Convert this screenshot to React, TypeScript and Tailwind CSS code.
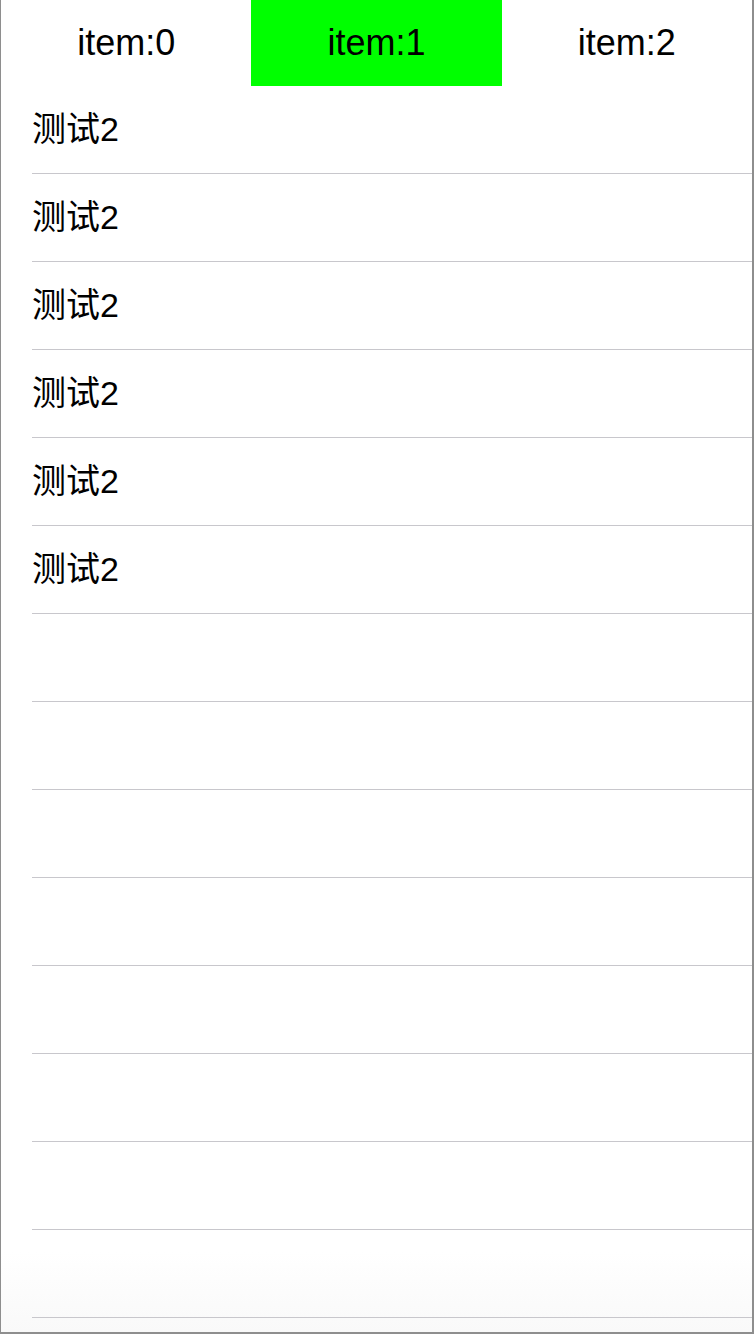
const tabs = ["item:0", "item:1", "item:2"];
const rows = ["测试2", "测试2", "测试2", "测试2", "测试2", "测试2", "", "", "", "", "", "", "", ""];

const font = {
  fontFamily: '"Liberation Sans", "Noto Sans CJK SC", sans-serif',
};

export default function App() {
  const active = 1;

  return (
    <div className="w-[754px] h-[1334px] bg-[#8e8e8e] overflow-hidden" style={font}>
      <div className="ml-px w-[751px] h-[1332px] bg-gradient-to-b from-white via-white via-[94%] to-[#f9f9f9] flex flex-col">
        {/* tab bar */}
        <div className="grid grid-cols-3 h-[86px] shrink-0">
          {tabs.map((t, i) => (
            <div
              key={t}
              className={`flex items-center justify-center text-[36px] text-black ${
                i === active ? "bg-[#00ff00]" : ""
              }`}
            >
              {t}
            </div>
          ))}
        </div>

        {/* list */}
        <div className="flex flex-col">
          {rows.map((r, i) => (
            <div key={i} className="pl-[31px]">
              <div className="h-[88px] border-b border-[#c8c7cc] flex items-center text-[34px] text-black">
                {r}
              </div>
            </div>
          ))}
        </div>
      </div>
    </div>
  );
}
